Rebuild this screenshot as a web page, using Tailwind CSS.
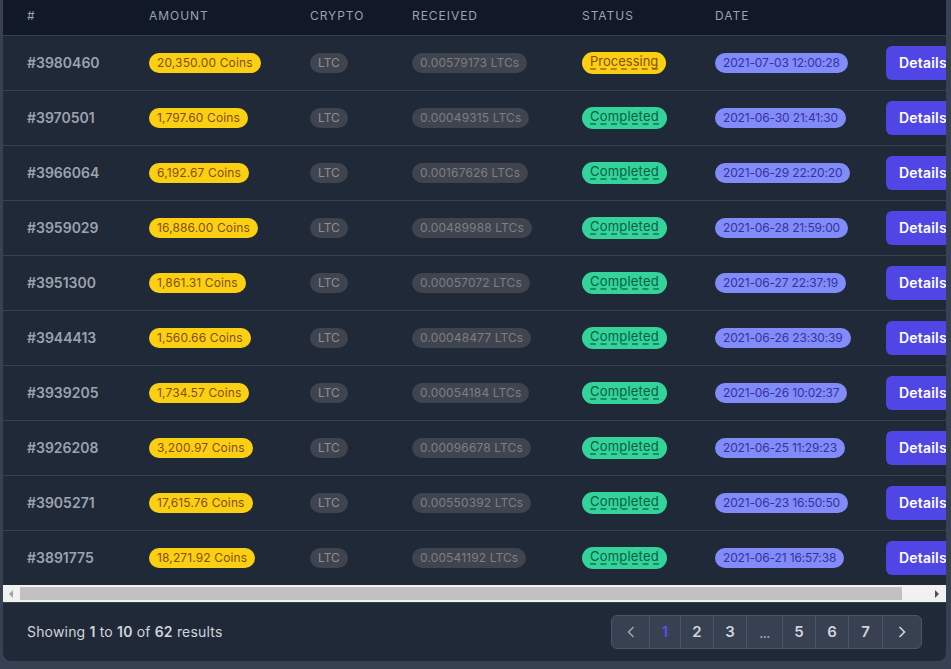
<!DOCTYPE html>
<html><head><meta charset="utf-8"><title>Orders</title>
<script src="https://cdn.jsdelivr.net/npm/@tailwindcss/browser@4"></script></head>
<body class="bg-[#374151] font-['Inter','Liberation_Sans',sans-serif] overflow-hidden">
<div class="h-[669px] w-[951px] pl-[3px] pr-[5px] pb-2">
<div class="h-[661px] bg-[#1f2937] rounded-b-lg overflow-hidden flex flex-col">
<div class="h-[585px] overflow-hidden">
<table class="w-[960px] table-fixed border-collapse">
<colgroup><col class="w-[146px]"><col class="w-[161px]"><col class="w-[102px]"><col class="w-[170px]"><col class="w-[133px]"><col class="w-[171px]"><col class="w-[77px]"></colgroup>
<thead class="bg-[#111827] text-left text-xs text-[#9ca3af] uppercase tracking-[0.08em]">
<tr class="h-[35px] border-b border-[#374151]"><th class="pl-6 pb-0.5 font-normal">#</th><th class="pb-0.5 font-normal">Amount</th><th class="pb-0.5 font-normal">Crypto</th><th class="pb-0.5 font-normal">Received</th><th class="pb-0.5 font-normal">Status</th><th class="pb-0.5 font-normal">Date</th><th></th></tr>
</thead>
<tbody class="text-xs">
<tr class="h-[55px] border-b border-[#374151]"><td class="pl-6 text-sm font-semibold text-[#9ca3af]">#3980460</td><td><span class="inline-block rounded-full bg-[#fcd012] px-2 leading-5 tracking-[0.13px] text-[#854d0e]">20,350.00 Coins</span></td><td><span class="inline-block rounded-full bg-[#3f444e] px-2 leading-5 text-[#8a8f96]">LTC</span></td><td><span class="inline-block rounded-full bg-[#3f444e] px-2 leading-5 tracking-[0.13px] text-[#7b7f85]">0.00579173 LTCs</span></td><td><span class="block w-fit h-[22px] rounded-full bg-[#fcd012] px-2 pt-[3px] text-[13px] text-[#854d0e]"><span class="block leading-[13px] border-b-2 border-dashed border-[#854d0e]/60">Processing</span></span></td><td><span class="inline-block rounded-full bg-[#818cf8] px-2 leading-5 tracking-[-0.15px] text-[#3730a3]">2021-07-03 12:00:28</span></td><td><a class="block w-fit rounded-md bg-[#4f46e5] px-[13px] py-[7px] text-sm font-semibold tracking-[0.2px] text-white">Details</a></td></tr>
<tr class="h-[55px] border-b border-[#374151]"><td class="pl-6 text-sm font-semibold text-[#9ca3af]">#3970501</td><td><span class="inline-block rounded-full bg-[#fcd012] px-2 leading-5 tracking-[0.13px] text-[#854d0e]">1,797.60 Coins</span></td><td><span class="inline-block rounded-full bg-[#3f444e] px-2 leading-5 text-[#8a8f96]">LTC</span></td><td><span class="inline-block rounded-full bg-[#3f444e] px-2 leading-5 tracking-[0.13px] text-[#7b7f85]">0.00049315 LTCs</span></td><td><span class="block w-fit h-[22px] rounded-full bg-[#34d399] px-2 pt-[3px] text-[13px] tracking-[0.2px] text-[#065f46]"><span class="block leading-[13px] border-b-2 border-dashed border-[#065f46]/60">Completed</span></span></td><td><span class="inline-block rounded-full bg-[#818cf8] px-2 leading-5 tracking-[-0.15px] text-[#3730a3]">2021-06-30 21:41:30</span></td><td><a class="block w-fit rounded-md bg-[#4f46e5] px-[13px] py-[7px] text-sm font-semibold tracking-[0.2px] text-white">Details</a></td></tr>
<tr class="h-[55px] border-b border-[#374151]"><td class="pl-6 text-sm font-semibold text-[#9ca3af]">#3966064</td><td><span class="inline-block rounded-full bg-[#fcd012] px-2 leading-5 tracking-[0.13px] text-[#854d0e]">6,192.67 Coins</span></td><td><span class="inline-block rounded-full bg-[#3f444e] px-2 leading-5 text-[#8a8f96]">LTC</span></td><td><span class="inline-block rounded-full bg-[#3f444e] px-2 leading-5 tracking-[0.13px] text-[#7b7f85]">0.00167626 LTCs</span></td><td><span class="block w-fit h-[22px] rounded-full bg-[#34d399] px-2 pt-[3px] text-[13px] tracking-[0.2px] text-[#065f46]"><span class="block leading-[13px] border-b-2 border-dashed border-[#065f46]/60">Completed</span></span></td><td><span class="inline-block rounded-full bg-[#818cf8] px-2 leading-5 tracking-[-0.15px] text-[#3730a3]">2021-06-29 22:20:20</span></td><td><a class="block w-fit rounded-md bg-[#4f46e5] px-[13px] py-[7px] text-sm font-semibold tracking-[0.2px] text-white">Details</a></td></tr>
<tr class="h-[55px] border-b border-[#374151]"><td class="pl-6 text-sm font-semibold text-[#9ca3af]">#3959029</td><td><span class="inline-block rounded-full bg-[#fcd012] px-2 leading-5 tracking-[0.13px] text-[#854d0e]">16,886.00 Coins</span></td><td><span class="inline-block rounded-full bg-[#3f444e] px-2 leading-5 text-[#8a8f96]">LTC</span></td><td><span class="inline-block rounded-full bg-[#3f444e] px-2 leading-5 tracking-[0.13px] text-[#7b7f85]">0.00489988 LTCs</span></td><td><span class="block w-fit h-[22px] rounded-full bg-[#34d399] px-2 pt-[3px] text-[13px] tracking-[0.2px] text-[#065f46]"><span class="block leading-[13px] border-b-2 border-dashed border-[#065f46]/60">Completed</span></span></td><td><span class="inline-block rounded-full bg-[#818cf8] px-2 leading-5 tracking-[-0.15px] text-[#3730a3]">2021-06-28 21:59:00</span></td><td><a class="block w-fit rounded-md bg-[#4f46e5] px-[13px] py-[7px] text-sm font-semibold tracking-[0.2px] text-white">Details</a></td></tr>
<tr class="h-[55px] border-b border-[#374151]"><td class="pl-6 text-sm font-semibold text-[#9ca3af]">#3951300</td><td><span class="inline-block rounded-full bg-[#fcd012] px-2 leading-5 tracking-[0.13px] text-[#854d0e]">1,861.31 Coins</span></td><td><span class="inline-block rounded-full bg-[#3f444e] px-2 leading-5 text-[#8a8f96]">LTC</span></td><td><span class="inline-block rounded-full bg-[#3f444e] px-2 leading-5 tracking-[0.13px] text-[#7b7f85]">0.00057072 LTCs</span></td><td><span class="block w-fit h-[22px] rounded-full bg-[#34d399] px-2 pt-[3px] text-[13px] tracking-[0.2px] text-[#065f46]"><span class="block leading-[13px] border-b-2 border-dashed border-[#065f46]/60">Completed</span></span></td><td><span class="inline-block rounded-full bg-[#818cf8] px-2 leading-5 tracking-[-0.15px] text-[#3730a3]">2021-06-27 22:37:19</span></td><td><a class="block w-fit rounded-md bg-[#4f46e5] px-[13px] py-[7px] text-sm font-semibold tracking-[0.2px] text-white">Details</a></td></tr>
<tr class="h-[55px] border-b border-[#374151]"><td class="pl-6 text-sm font-semibold text-[#9ca3af]">#3944413</td><td><span class="inline-block rounded-full bg-[#fcd012] px-2 leading-5 tracking-[0.13px] text-[#854d0e]">1,560.66 Coins</span></td><td><span class="inline-block rounded-full bg-[#3f444e] px-2 leading-5 text-[#8a8f96]">LTC</span></td><td><span class="inline-block rounded-full bg-[#3f444e] px-2 leading-5 tracking-[0.13px] text-[#7b7f85]">0.00048477 LTCs</span></td><td><span class="block w-fit h-[22px] rounded-full bg-[#34d399] px-2 pt-[3px] text-[13px] tracking-[0.2px] text-[#065f46]"><span class="block leading-[13px] border-b-2 border-dashed border-[#065f46]/60">Completed</span></span></td><td><span class="inline-block rounded-full bg-[#818cf8] px-2 leading-5 tracking-[-0.15px] text-[#3730a3]">2021-06-26 23:30:39</span></td><td><a class="block w-fit rounded-md bg-[#4f46e5] px-[13px] py-[7px] text-sm font-semibold tracking-[0.2px] text-white">Details</a></td></tr>
<tr class="h-[55px] border-b border-[#374151]"><td class="pl-6 text-sm font-semibold text-[#9ca3af]">#3939205</td><td><span class="inline-block rounded-full bg-[#fcd012] px-2 leading-5 tracking-[0.13px] text-[#854d0e]">1,734.57 Coins</span></td><td><span class="inline-block rounded-full bg-[#3f444e] px-2 leading-5 text-[#8a8f96]">LTC</span></td><td><span class="inline-block rounded-full bg-[#3f444e] px-2 leading-5 tracking-[0.13px] text-[#7b7f85]">0.00054184 LTCs</span></td><td><span class="block w-fit h-[22px] rounded-full bg-[#34d399] px-2 pt-[3px] text-[13px] tracking-[0.2px] text-[#065f46]"><span class="block leading-[13px] border-b-2 border-dashed border-[#065f46]/60">Completed</span></span></td><td><span class="inline-block rounded-full bg-[#818cf8] px-2 leading-5 tracking-[-0.15px] text-[#3730a3]">2021-06-26 10:02:37</span></td><td><a class="block w-fit rounded-md bg-[#4f46e5] px-[13px] py-[7px] text-sm font-semibold tracking-[0.2px] text-white">Details</a></td></tr>
<tr class="h-[55px] border-b border-[#374151]"><td class="pl-6 text-sm font-semibold text-[#9ca3af]">#3926208</td><td><span class="inline-block rounded-full bg-[#fcd012] px-2 leading-5 tracking-[0.13px] text-[#854d0e]">3,200.97 Coins</span></td><td><span class="inline-block rounded-full bg-[#3f444e] px-2 leading-5 text-[#8a8f96]">LTC</span></td><td><span class="inline-block rounded-full bg-[#3f444e] px-2 leading-5 tracking-[0.13px] text-[#7b7f85]">0.00096678 LTCs</span></td><td><span class="block w-fit h-[22px] rounded-full bg-[#34d399] px-2 pt-[3px] text-[13px] tracking-[0.2px] text-[#065f46]"><span class="block leading-[13px] border-b-2 border-dashed border-[#065f46]/60">Completed</span></span></td><td><span class="inline-block rounded-full bg-[#818cf8] px-2 leading-5 tracking-[-0.15px] text-[#3730a3]">2021-06-25 11:29:23</span></td><td><a class="block w-fit rounded-md bg-[#4f46e5] px-[13px] py-[7px] text-sm font-semibold tracking-[0.2px] text-white">Details</a></td></tr>
<tr class="h-[55px] border-b border-[#374151]"><td class="pl-6 text-sm font-semibold text-[#9ca3af]">#3905271</td><td><span class="inline-block rounded-full bg-[#fcd012] px-2 leading-5 tracking-[0.13px] text-[#854d0e]">17,615.76 Coins</span></td><td><span class="inline-block rounded-full bg-[#3f444e] px-2 leading-5 text-[#8a8f96]">LTC</span></td><td><span class="inline-block rounded-full bg-[#3f444e] px-2 leading-5 tracking-[0.13px] text-[#7b7f85]">0.00550392 LTCs</span></td><td><span class="block w-fit h-[22px] rounded-full bg-[#34d399] px-2 pt-[3px] text-[13px] tracking-[0.2px] text-[#065f46]"><span class="block leading-[13px] border-b-2 border-dashed border-[#065f46]/60">Completed</span></span></td><td><span class="inline-block rounded-full bg-[#818cf8] px-2 leading-5 tracking-[-0.15px] text-[#3730a3]">2021-06-23 16:50:50</span></td><td><a class="block w-fit rounded-md bg-[#4f46e5] px-[13px] py-[7px] text-sm font-semibold tracking-[0.2px] text-white">Details</a></td></tr>
<tr class="h-[55px]"><td class="pl-6 text-sm font-semibold text-[#9ca3af]">#3891775</td><td><span class="inline-block rounded-full bg-[#fcd012] px-2 leading-5 tracking-[0.13px] text-[#854d0e]">18,271.92 Coins</span></td><td><span class="inline-block rounded-full bg-[#3f444e] px-2 leading-5 text-[#8a8f96]">LTC</span></td><td><span class="inline-block rounded-full bg-[#3f444e] px-2 leading-5 tracking-[0.13px] text-[#7b7f85]">0.00541192 LTCs</span></td><td><span class="block w-fit h-[22px] rounded-full bg-[#34d399] px-2 pt-[3px] text-[13px] tracking-[0.2px] text-[#065f46]"><span class="block leading-[13px] border-b-2 border-dashed border-[#065f46]/60">Completed</span></span></td><td><span class="inline-block rounded-full bg-[#818cf8] px-2 leading-5 tracking-[-0.15px] text-[#3730a3]">2021-06-21 16:57:38</span></td><td><a class="block w-fit rounded-md bg-[#4f46e5] px-[13px] py-[7px] text-sm font-semibold tracking-[0.2px] text-white">Details</a></td></tr>
</tbody></table></div>
<div class="h-[17px] bg-[#f1f1f1] flex items-center shrink-0">
<div class="w-[17px] flex justify-center"><svg width="5" height="8" viewBox="0 0 5 8"><path d="M4 0v8L0 4z" fill="#a3a3a3"/></svg></div>
<div class="w-[882px] h-[13px] bg-[#c1c1c1]"></div>
<div class="flex-1"></div>
<div class="w-[17px] flex justify-center"><svg width="5" height="8" viewBox="0 0 5 8"><path d="M0 0v8l4-4z" fill="#505050"/></svg></div>
</div>
<div class="flex-1 flex items-center justify-between px-6 border-t border-[#374151]">
<p class="text-sm tracking-[0.18px] text-[#d1d5db]">Showing <b class="font-semibold">1</b> to <b class="font-semibold">10</b> of <b class="font-semibold">62</b> results</p>
<nav class="flex h-[34px] rounded-md border border-[#4b5563] bg-[#374151] text-[15px] font-semibold text-[#d1d5db] divide-x divide-[#4b5563]">
<a class="w-[38px] flex items-center justify-center"><svg width="20" height="20" viewBox="0 0 20 20" fill="none" stroke="#9ca3af" stroke-width="1.6"><path d="M12.5 5l-5 5 5 5"/></svg></a>
<a class="w-[31px] flex items-center justify-center text-[#5550ee]">1</a>
<a class="w-[33px] flex items-center justify-center">2</a>
<a class="w-[33px] flex items-center justify-center">3</a>
<a class="w-[36px] flex items-center justify-center text-[#9ca3af]"><span class="mt-1 text-xs font-bold tracking-[-0.5px]">...</span></a>
<a class="w-[33px] flex items-center justify-center">5</a>
<a class="w-[33px] flex items-center justify-center">6</a>
<a class="w-[34px] flex items-center justify-center">7</a>
<a class="w-[38px] flex items-center justify-center"><svg width="20" height="20" viewBox="0 0 20 20" fill="none" stroke="#d1d5db" stroke-width="1.6"><path d="M7.5 5l5 5-5 5"/></svg></a>
</nav></div>
</div></div>
</body></html>
